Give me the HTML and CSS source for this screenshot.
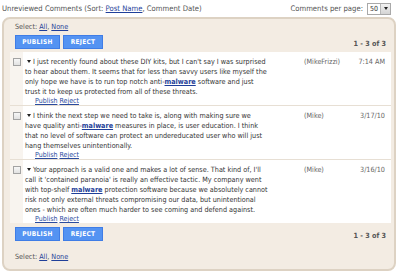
FILE: index.html
```html
<!DOCTYPE html>
<html>
<head>
<meta charset="utf-8">
<link rel="stylesheet" href="styles.css">
</head>
<body>
<div class="topbar">
  <div class="title">Unreviewed Comments (Sort: <a href="#" class="link">Post Name</a>, Comment Date)</div>
  <div class="perpage">Comments per page:
    <span class="select"><span class="select-val">50</span><span class="select-btn"><span class="tri"></span></span></span>
  </div>
</div>
<div class="panel">
  <div class="selectline">Select: <a href="#" class="link">All</a>, <a href="#" class="link">None</a></div>
  <div class="controls">
    <div class="buttons"><button class="btn btn-publish">PUBLISH</button><button class="btn btn-reject">REJECT</button></div>
    <div class="count">1 - 3 of 3</div>
  </div>
  <div class="table">
    <div class="row">
      <div class="cell-check"><input type="checkbox" class="cb"></div>
      <div class="cell-text">
        <p class="comment"><span class="arrow"></span>I just recently found about these DIY kits, but I can't say I was surprised<br>to hear about them. It seems that for less than savvy users like myself the<br>only hope we have is to run top notch anti-<a href="#" class="kw">malware</a> software and just<br>trust it to keep us protected from all of these threats.</p>
        <div class="actions"><a href="#" class="act">Publish</a> <a href="#" class="act">Reject</a></div>
      </div>
      <div class="cell-author">(MikeFrizzi)</div>
      <div class="cell-date">7:14 AM</div>
    </div>
    <div class="row">
      <div class="cell-check"><input type="checkbox" class="cb"></div>
      <div class="cell-text">
        <p class="comment"><span class="arrow"></span>I think the next step we need to take is, along with making sure we<br>have quality anti-<a href="#" class="kw">malware</a> measures in place, is user education. I think<br>that no level of software can protect an undereducated user who will just<br>hang themselves unintentionally.</p>
        <div class="actions"><a href="#" class="act">Publish</a> <a href="#" class="act">Reject</a></div>
      </div>
      <div class="cell-author">(Mike)</div>
      <div class="cell-date">3/17/10</div>
    </div>
    <div class="row">
      <div class="cell-check"><input type="checkbox" class="cb"></div>
      <div class="cell-text">
        <p class="comment"><span class="arrow"></span>Your approach is a valid one and makes a lot of sense. That kind of, I'll<br>call it 'contained paranoia' is really an effective tactic. My company went<br>with top-shelf <a href="#" class="kw">malware</a> protection software because we absolutely cannot<br>risk not only external threats compromising our data, but unintentional<br>ones - which are often much harder to see coming and defend against.</p>
        <div class="actions"><a href="#" class="act">Publish</a> <a href="#" class="act">Reject</a></div>
      </div>
      <div class="cell-author">(Mike)</div>
      <div class="cell-date">3/16/10</div>
    </div>
  </div>
  <div class="controls controls-bottom">
    <div class="buttons"><button class="btn btn-publish">PUBLISH</button><button class="btn btn-reject">REJECT</button></div>
    <div class="count">1 - 3 of 3</div>
  </div>
  <div class="selectline selectline-bottom">Select: <a href="#" class="link">All</a>, <a href="#" class="link">None</a></div>
</div>
</body>
</html>
```
FILE: styles.css
```css
html, body {
  margin: 0;
  padding: 0;
  background: #ffffff;
}
body {
  font-family: "DejaVu Sans Condensed", "DejaVu Sans", sans-serif;
  font-stretch: condensed;
  font-size: 7.2px;
  color: #444;
  width: 400px;
  height: 275px;
  overflow: hidden;
}
a { text-decoration: underline; }
.link { color: #1f3f99; }

.topbar {
  display: flex;
  justify-content: space-between;
  align-items: center;
  height: 17px;
  padding: 0 9px 0 2px;
  box-sizing: border-box;
  font-size: 7.65px;
  color: #555;
}
.perpage {
  display: flex;
  align-items: center;
  gap: 4px;
}
.select {
  display: flex;
  width: 24px;
  height: 12px;
  border: 1px solid #a9a9a9;
  background: #fff;
  box-sizing: border-box;
}
.select-val {
  flex: 1;
  font-size: 7px;
  line-height: 10px;
  padding-left: 2px;
  color: #333;
}
.select-btn {
  width: 9px;
  background: linear-gradient(#f2f2f2, #d4d4d4);
  border-left: 1px solid #b8b8b8;
  display: flex;
  align-items: center;
  justify-content: center;
}
.tri {
  width: 0;
  height: 0;
  border-left: 2.5px solid transparent;
  border-right: 2.5px solid transparent;
  border-top: 3px solid #222;
}

.panel {
  margin: 0 4px 0 2px;
  height: 254px;
  box-sizing: border-box;
  border: 2px solid #ddd2c3;
  border-radius: 8px;
  background: #f3ece3;
  padding: 3px 3px 0 6px;
}
.selectline {
  line-height: 10px;
  padding-left: 5px;
  color: #555;
}
.controls {
  display: flex;
  justify-content: space-between;
  align-items: flex-end;
  margin-top: 3px;
  padding: 0 5px 0 5px;
}
.buttons { display: flex; gap: 3px; }
.btn {
  font-family: inherit;
  font-stretch: condensed;
  height: 14px;
  padding: 0;
  border: 1px solid #3f7de6;
  background: #5493f2;
  color: #fff;
  font-weight: bold;
  font-size: 6.5px;
  letter-spacing: 0.3px;
}
.btn-publish { width: 45px; }
.btn-reject { width: 40px; }
.count {
  color: #555;
  font-weight: bold;
  line-height: 10px;
}

.table {
  margin-top: 3px;
  background: #fff;
}
.row {
  display: grid;
  grid-template-columns: 13px 277px 50px 41px;
  border-top: 1px solid #e7dfd4;
}
.row:first-child { border-top: none; }
.cell-check {
  background: #f8f4ef;
  padding-top: 6px;
}
.cb {
  appearance: none;
  -webkit-appearance: none;
  display: block;
  margin: 0 0 0 3px;
  width: 8px;
  height: 8px;
  border: 1px solid #a3a3a3;
  background: linear-gradient(#f7f7f7, #e2e2e2);
  box-sizing: border-box;
}
.cell-text {
  padding: 5px 8px 0 2px;
}
.comment {
  margin: 0;
  line-height: 10px;
  color: #333;
}
.arrow {
  display: inline-block;
  width: 0;
  height: 0;
  border-left: 2.5px solid transparent;
  border-right: 2.5px solid transparent;
  border-top: 3.5px solid #222;
  vertical-align: 1px;
  margin: 0 2px 0 2px;
}
.kw {
  color: #1f3f99;
  font-weight: bold;
}
.actions {
  line-height: 8px;
  font-size: 7px;
  padding-left: 10px;
}
.act { color: #2a4b9e; }
.cell-author {
  padding: 5px 0 0 4px;
  line-height: 10px;
  color: #666;
}
.cell-date {
  padding: 5px 6px 0 0;
  line-height: 10px;
  text-align: right;
  color: #666;
}
.controls-bottom { margin-top: 4px; }
.selectline-bottom { margin-top: 11px; }
```
